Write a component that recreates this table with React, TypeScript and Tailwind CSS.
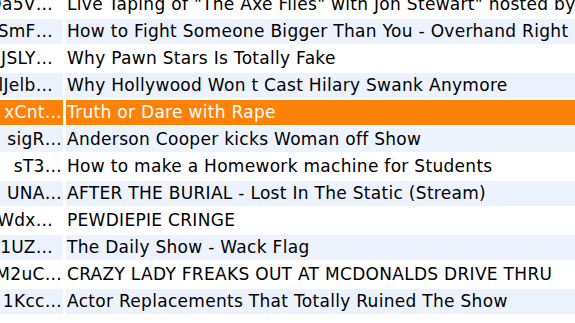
import React from "react";

type Row = { id: string; pr: string; title: string; bg: string; text: string };

const rows: Row[] = [
  { id: "nRDa5V…", pr: "pr-[10px]", title: "Live Taping of \"The Axe Files\" with Jon Stewart\" hosted by David Axelrod", bg: "bg-white", text: "text-black" },
  { id: "hlSmF…", pr: "pr-[10px]", title: "How to Fight Someone Bigger Than You - Overhand Right Punch", bg: "bg-[#edf3fe]", text: "text-black" },
  { id: "uJSLY…", pr: "pr-[10px]", title: "Why Pawn Stars Is Totally Fake", bg: "bg-white", text: "text-black" },
  { id: "lJelb…", pr: "pr-[10px]", title: "Why Hollywood Won t Cast Hilary Swank Anymore", bg: "bg-[#edf3fe]", text: "text-black" },
  { id: "xCnt…", pr: "pr-[1px]", title: "Truth or Dare with Rape", bg: "bg-[#fe8208]", text: "text-white" },
  { id: "sigR…", pr: "pr-[1px]", title: "Anderson Cooper kicks Woman off Show", bg: "bg-[#edf3fe]", text: "text-black" },
  { id: "sT3…", pr: "pr-[1px]", title: "How to make a Homework machine for Students", bg: "bg-white", text: "text-black" },
  { id: "UNA…", pr: "pr-[1px]", title: "AFTER THE BURIAL - Lost In The Static (Stream)", bg: "bg-[#edf3fe]", text: "text-black" },
  { id: "Wdx…", pr: "pr-[10px]", title: "PEWDIEPIE CRINGE", bg: "bg-white", text: "text-black" },
  { id: "1UZ…", pr: "pr-[10px]", title: "The Daily Show - Wack Flag", bg: "bg-[#edf3fe]", text: "text-black" },
  { id: "oM2uC…", pr: "pr-[1px]", title: "CRAZY LADY FREAKS OUT AT MCDONALDS DRIVE THRU", bg: "bg-white", text: "text-black" },
  { id: "1Kcc…", pr: "pr-[1px]", title: "Actor Replacements That Totally Ruined The Show", bg: "bg-[#edf3fe]", text: "text-black" },
  { id: "", pr: "pr-[1px]", title: "", bg: "bg-white", text: "text-black" },
];

export default function App() {
  return (
    <div className="w-[575px] h-[323px] overflow-hidden bg-white font-['DejaVu_Sans',sans-serif] text-[17px] tracking-[0.3px]">
      <div className="flex flex-col mt-[-9px]">
        {rows.map((r, i) => (
          <div key={i} className="flex h-[27px] py-[1px] gap-[3px]">
            <div className={`w-[63px] shrink-0 flex items-center justify-end overflow-hidden whitespace-nowrap ${r.pr} ${r.bg} ${r.text}`}>
              {r.id}
            </div>
            <div className={`flex-1 flex items-center overflow-hidden whitespace-nowrap pl-[1px] ${r.bg} ${r.text}`}>
              {r.title}
            </div>
          </div>
        ))}
      </div>
    </div>
  );
}
